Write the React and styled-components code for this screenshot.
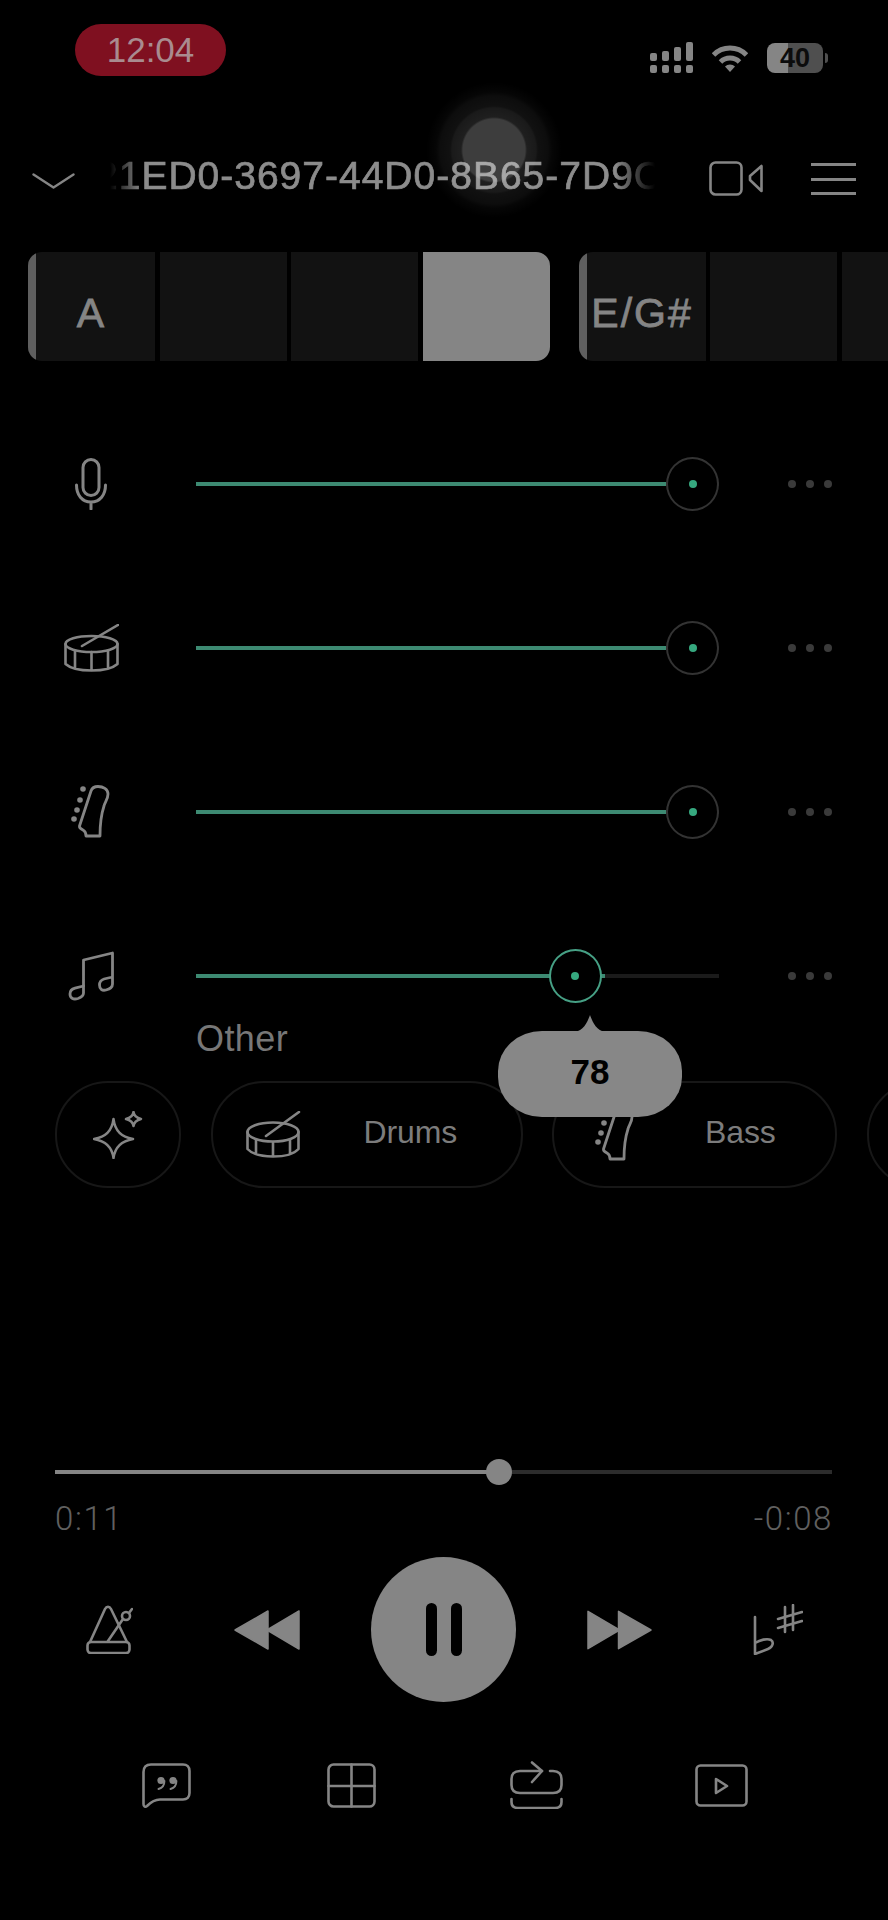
import React from "react";
import styled, { createGlobalStyle } from "styled-components";

const Global = createGlobalStyle`
  html, body { margin: 0; padding: 0; background: #000; }
  * { box-sizing: border-box; }
`;

const GREY = "#858585";

const Page = styled.div`
  position: relative;
  width: 888px;
  height: 1920px;
  background: #000;
  overflow: hidden;
  display: flex;
  flex-direction: column;
  font-family: "Liberation Sans", Arial, sans-serif;
  color: ${GREY};
`;

const StatusBar = styled.div`
  height: 140px;
  padding: 24px 65px 0 75px;
  display: flex;
  justify-content: space-between;
  align-items: flex-start;
`;
const TimePill = styled.div`
  width: 151px;
  height: 52px;
  border-radius: 26px;
  background: #7f1020;
  color: #a98b8f;
  font-size: 35px;
  line-height: 52px;
  text-align: center;
`;
const StatusIcons = styled.div`
  display: flex;
  align-items: flex-start;
  margin-top: 18px;
`;
const Signal = styled.svg`
  width: 44px;
  height: 32px;
  margin-right: 18px;
`;
const Wifi = styled.svg`
  width: 36px;
  height: 27px;
  margin-top: 3px;
  margin-right: 19px;
`;
const Battery = styled.div`
  position: relative;
  width: 56px;
  height: 30px;
  margin-top: 1px;
  border-radius: 8px;
  background: linear-gradient(90deg, #858585 0 38%, #4f4f4f 38% 100%);
  color: #0c0c0c;
  font-size: 27px;
  font-weight: 700;
  line-height: 30px;
  text-align: center;
  &::after {
    content: "";
    position: absolute;
    left: 58px;
    top: 10px;
    width: 3px;
    height: 10px;
    border-radius: 0 3px 3px 0;
    background: #4f4f4f;
  }
`;

const Header = styled.div`
  height: 72px;
  padding-left: 32px;
  display: flex;
  align-items: center;
`;
const Chevron = styled.svg`
  width: 43px;
  height: 16px;
  flex: none;
  margin-top: 10px;
`;
const TitleBox = styled.div`
  width: 545px;
  margin: 0 54px 0 35px;
  overflow: hidden;
  white-space: nowrap;
  mask-image: linear-gradient(90deg, transparent 0, #000 32px, #000 505px, transparent 545px);
`;
const TitleText = styled.div`
  margin-left: -14px;
  font-size: 39px;
  letter-spacing: 1px;
  line-height: 48px;
  color: #8c8c8c;
  -webkit-text-stroke: 0.7px #8c8c8c;
`;
const VideoIcon = styled.svg`
  width: 54px;
  height: 35px;
  flex: none;
  margin: 4px 48px 0 0;
`;
const Menu = styled.div`
  width: 45px;
  height: 32px;
  flex: none;
  display: flex;
  flex-direction: column;
  justify-content: space-between;
  margin-top: 6px;
`;
const MenuLine = styled.span`
  display: block;
  height: 3px;
  background: ${GREY};
`;

const Glow = styled.div`
  position: absolute;
  left: 426px;
  top: 82px;
  width: 136px;
  height: 136px;
  border-radius: 50%;
  background: radial-gradient(
    circle,
    rgba(255, 255, 255, 0.24) 0 31px,
    rgba(255, 255, 255, 0.12) 33px,
    rgba(255, 255, 255, 0.1) 42px,
    rgba(255, 255, 255, 0.065) 44px,
    rgba(255, 255, 255, 0.05) 54px,
    rgba(255, 255, 255, 0.025) 58px,
    rgba(255, 255, 255, 0) 68px
  );
`;

const ChordStrip = styled.div`
  margin-top: 40px;
  height: 109px;
  padding-left: 28px;
  display: flex;
  gap: 29px;
  overflow: hidden;
`;
const ChordGroup = styled.div`
  position: relative;
  flex: none;
  display: flex;
  gap: 4.5px;
  border-radius: 14px;
  overflow: hidden;
  &::before {
    content: "";
    position: absolute;
    left: 0;
    top: 0;
    bottom: 0;
    width: 8px;
    background: #5f5f5f;
  }
`;
const ChordCell = styled.div`
  width: 127px;
  height: 109px;
  padding-top: 14px;
  background: ${(p) => (p.$active ? "#858585" : "#121212")};
  color: #858585;
  font-size: 41px;
  -webkit-text-stroke: 0.8px #858585;
  letter-spacing: 2px;
  line-height: 95px;
  text-align: center;
`;

const Tracks = styled.div`
  margin-top: 96px;
  display: flex;
  flex-direction: column;
  gap: 110px;
`;
const TrackRow = styled.div`
  height: 54px;
  display: flex;
  align-items: center;
`;
const TrackIcon = styled.div`
  width: 196px;
  height: 54px;
  padding-right: 14px;
  display: flex;
  align-items: center;
  justify-content: center;
  flex: none;
`;
const Slider = styled.div`
  position: relative;
  width: 523px;
  height: 54px;
  flex: none;
`;
const SliderTrack = styled.div`
  position: absolute;
  left: 0;
  right: 0;
  top: 25px;
  height: 4px;
  background: #1b1b1b;
`;
const SliderFill = styled.div`
  height: 100%;
  background: #3d8a72;
`;
const Thumb = styled.div`
  position: absolute;
  top: 0;
  width: 53px;
  height: 54px;
  margin-left: -26.5px;
  border-radius: 50%;
  background: #000;
  border: 2px solid ${(p) => (p.$active ? "#46a085" : "#333")};
  display: flex;
  align-items: center;
  justify-content: center;
  &::after {
    content: "";
    width: 8px;
    height: 8px;
    border-radius: 50%;
    background: #36a87f;
  }
`;
const Tooltip = styled.div`
  position: absolute;
  left: 302px;
  top: 82px;
  z-index: 5;
  width: 184px;
  height: 86px;
  border-radius: 44px / 40px;
  background: #878787;
  color: #000;
  font-size: 35px;
  font-weight: 700;
  line-height: 82px;
  text-align: center;
  &::before {
    content: "";
    position: absolute;
    left: 76.5px;
    top: -16px;
    width: 31px;
    height: 17px;
    background: #878787;
    clip-path: path("M0 17 C9 16 13 7 15.5 0 C18 7 22 16 31 17 Z");
  }
`;
const Dots = styled.div`
  margin-left: 69px;
  display: flex;
  gap: 10px;
`;
const Dot = styled.span`
  width: 8px;
  height: 8px;
  border-radius: 50%;
  background: #3a3a3a;
`;
const TrackLabel = styled.div`
  margin: 16px 0 0 196px;
  font-size: 36px;
  letter-spacing: 0.4px;
  line-height: 40px;
  color: #777;
`;

const PillRow = styled.div`
  margin-top: 22px;
  padding-left: 55px;
  display: flex;
  gap: 29.5px;
  overflow: hidden;
`;
const Pill = styled.div`
  flex: none;
  width: ${(p) => p.$w}px;
  height: 107px;
  border: 2px solid #171717;
  border-radius: 53px;
  padding: 0 0 4px 31px;
  display: flex;
  align-items: center;
  color: #7c7c7c;
  font-size: 32px;
  letter-spacing: -0.1px;
`;
const RoundPill = styled(Pill)`
  padding: 0;
  justify-content: center;
`;
const PillIcon = styled.div`
  width: 60px;
  margin-right: 60px;
  display: flex;
  justify-content: center;
  align-items: center;
  flex: none;
  transform: translateY(2px);
`;

const Progress = styled.div`
  position: relative;
  margin: 271px 56px 0 55px;
  height: 26px;
  display: flex;
  align-items: center;
`;
const ProgressTrack = styled.div`
  width: 100%;
  height: 4px;
  background: #2c2c2c;
`;
const ProgressFill = styled.div`
  height: 100%;
  background: #858585;
`;
const ProgressThumb = styled.div`
  position: absolute;
  top: 0;
  width: 26px;
  height: 26px;
  margin-left: -13px;
  border-radius: 50%;
  background: #858585;
`;
const Times = styled.div`
  margin: 14px 55px 0 55px;
  display: flex;
  justify-content: space-between;
  font-family: Roboto, "Liberation Sans", sans-serif;
  font-weight: 300;
  font-size: 33px;
  letter-spacing: 1.6px;
  line-height: 40px;
  color: #606060;
`;

const TransportRow = styled.div`
  margin-top: 18px;
  padding: 0 85px 0 86px;
  height: 145px;
  display: flex;
  align-items: center;
  justify-content: space-between;
`;
const CenterControls = styled.div`
  display: flex;
  align-items: center;
  gap: 71px;
`;
const PlayButton = styled.div`
  width: 145px;
  height: 145px;
  border-radius: 50%;
  background: #858585;
  display: flex;
  align-items: center;
  justify-content: center;
  gap: 14px;
`;
const PauseBar = styled.span`
  width: 11px;
  height: 53px;
  border-radius: 6px;
  background: #000;
`;
const BottomRow = styled.div`
  margin-top: 59px;
  padding-left: 142px;
  display: grid;
  grid-template-columns: 185px 183px 185px auto;
  align-items: center;
`;

const stroke = { fill: "none", stroke: GREY, strokeLinecap: "round", strokeLinejoin: "round" };

const Mic = () => (
  <svg width="32" height="52" viewBox="0 0 32 52" {...stroke} strokeWidth="3">
    <rect x="8" y="1.5" width="16" height="36" rx="8" />
    <path d="M1.5 27 C1.5 37 7 44 16 44 C25 44 30.5 37 30.5 27 M16 44 V51" />
  </svg>
);
const Drum = () => (
  <svg width="55" height="48" viewBox="0 0 55 48" {...stroke} strokeWidth="2.6">
    <ellipse cx="27.5" cy="20" rx="26" ry="8" />
    <path d="M1.5 20 V40 C6 44 16 46.5 27.5 46.5 C39 46.5 49 44 53.5 40 V20 M11 27 V44 M27.5 28 V46 M44 27 V44 M18 22 L54 1" />
  </svg>
);
const PillDrum = () => (
  <svg width="55" height="47" viewBox="0 0 55 47" {...stroke} strokeWidth="2.6">
    <ellipse cx="27" cy="21" rx="25.5" ry="9.5" />
    <path d="M1.5 21 V38 C6 43 16 45.5 27 45.5 C38 45.5 48 43 52.5 38 V21 M10 29 V42 M27 31 V45 M44 29 V42 M20 25 L53 1" />
  </svg>
);
const Bass = () => (
  <svg width="40" height="54" viewBox="0 0 40 54">
    <path
      {...stroke}
      strokeWidth="2.8"
      d="M15 51 H29 C29 44 30 30 33 21 C34 17 37 14 37 9 C37 4 32 1.5 27 1.5 C23 1.5 21 3 20 6 L8.5 41 C8 43 10 44 12 45 C14 46 15 48 15 51 Z"
    />
    <g fill={GREY}>
      <circle cx="12" cy="4" r="2.8" />
      <circle cx="9" cy="15" r="2.8" />
      <circle cx="6" cy="25" r="2.8" />
      <circle cx="3" cy="34" r="2.8" />
    </g>
  </svg>
);
const Notes = () => (
  <svg width="46" height="50" viewBox="0 0 46 50" {...stroke} strokeWidth="2.8">
    <path d="M15.5 35 V9 L44.5 2 V33 C44.5 36 42 38 38 39 C34 40 31.5 38 31.5 34 C31.5 31 33 29 36 28 L44.5 26" />
    <path d="M15.5 35 V42 C15.5 45 13 46.5 10 47.5 C5 49 2 47 2 43 C2 40 4 38 7 37.2 L15.5 35" />
  </svg>
);
const Sparkle = () => (
  <svg width="50" height="48" viewBox="0 0 50 48" {...stroke} strokeWidth="2.5">
    <path d="M20.5 8 C22 20 28 26 40 28 C28 30 22 36 20.5 47 C19 36 13 30 1 28 C13 26 19 20 20.5 8 Z" />
    <path d="M40.5 1 C41 4.5 44 7 48 8 C44 9 41 11 40.5 15 C40 11 37 9 33 8 C37 7 40 4.5 40.5 1 Z" />
  </svg>
);
const Metronome = () => (
  <svg width="47" height="49" viewBox="0 0 47 49" {...stroke} strokeWidth="2.6">
    <path d="M4 37 L19 4 C20.5 1 23.5 1 25 4 L41 37" />
    <rect x="1.5" y="37" width="42" height="11" rx="3.5" />
    <path d="M22 36 L37 14 M43 8 L46 4" />
    <circle cx="40" cy="11" r="4" />
  </svg>
);
const Rewind = () => (
  <svg width="66" height="40" viewBox="0 0 66 40" fill={GREY} stroke={GREY} strokeWidth="1.5" strokeLinejoin="round">
    <path d="M1 20 L34 1 V39 Z" />
    <path d="M33 20 L65 1 V39 Z" />
  </svg>
);
const Forward = () => (
  <svg width="65" height="40" viewBox="0 0 66 40" fill={GREY} stroke={GREY} strokeWidth="1.5" strokeLinejoin="round">
    <path d="M65 20 L32 1 V39 Z" />
    <path d="M33 20 L1 1 V39 Z" />
  </svg>
);
const FlatSharp = () => (
  <svg width="50" height="51" viewBox="0 0 50 51" {...stroke} strokeWidth="2.6">
    <path d="M2 13 V50 L15 45 C20 43 21 38 18 36 C14 34 7 36 2 39" />
    <path d="M32 3 V28 M40 1 V26 M25 15 L49 8 M25 24 L49 17" />
  </svg>
);
const QuoteIcon = () => (
  <svg width="49" height="45" viewBox="0 0 49 45">
    <path
      {...stroke}
      strokeWidth="2.6"
      d="M9 1.5 H41 C45 1.5 47.5 4 47.5 8 V30 C47.5 34 45 36.5 41 36.5 H18 C13 36.5 9 39 5 43 C3 44.5 1.5 43.5 1.5 41 V9 C1.5 4 4 1.5 9 1.5 Z"
    />
    <circle cx="19" cy="17.5" r="3.6" fill={GREY} />
    <circle cx="31" cy="17.5" r="3.6" fill={GREY} />
    <path {...stroke} strokeWidth="2" d="M22.4 18 C22.4 22 20 25 16.5 26 M34.4 18 C34.4 22 32 25 28.5 26" />
  </svg>
);
const GridIcon = () => (
  <svg width="49" height="45" viewBox="0 0 49 45" {...stroke} strokeWidth="2.6">
    <rect x="1.5" y="1.5" width="46" height="42" rx="5" />
    <path d="M24.5 1.5 V43.5 M1.5 23 H47.5" />
  </svg>
);
const RepeatIcon = () => (
  <svg width="53" height="48" viewBox="0 0 53 48" {...stroke} strokeWidth="2.6">
    <path d="M32 10 H10 C4 10 1.5 13 1.5 18 V24 C1.5 29 4 32 10 32 H43 C49 32 51.5 29 51.5 24 V18 C51.5 13 49 10 43 10 H40" />
    <path d="M22 1.5 L32 10 L22 21" />
    <path d="M1.5 38 V41 C1.5 45 4 47 8 47 H45 C49 47 51.5 45 51.5 41 V38" />
  </svg>
);
const VideoPlayIcon = () => (
  <svg width="53" height="43" viewBox="0 0 53 43" {...stroke} strokeWidth="2.6">
    <rect x="1.5" y="1.5" width="50" height="40" rx="4" />
    <path d="M21 15 L32 22 L21 29 Z" />
  </svg>
);

const tracks = [
  { icon: <Mic />, fill: 470, thumb: 496.5 },
  { icon: <Drum />, fill: 470, thumb: 496.5 },
  { icon: <Bass />, fill: 470, thumb: 496.5 },
  { icon: <Notes />, fill: 409, thumb: 379, active: true, tip: 78 },
];

export default function App() {
  return (
    <Page>
      <Global />
      <StatusBar>
        <TimePill>12:04</TimePill>
        <StatusIcons>
          <Signal viewBox="0 0 44 32" fill={GREY}>
            <rect x="0" y="11" width="7" height="8" rx="2" />
            <rect x="12" y="9" width="7" height="10" rx="2" />
            <rect x="24" y="5" width="7" height="14" rx="2" />
            <rect x="36" y="0" width="7" height="19" rx="2" />
            <rect x="0" y="23" width="7" height="8" rx="2" />
            <rect x="12" y="23" width="7" height="8" rx="2" />
            <rect x="24" y="23" width="7" height="8" rx="2" />
            <rect x="36" y="23" width="7" height="8" rx="2" />
          </Signal>
          <Wifi viewBox="0 0 36 27">
            <path d="M1.5 10 A23 23 0 0 1 34.5 10 M8.5 17 A13.5 13.5 0 0 1 27.5 17" fill="none" stroke={GREY} strokeWidth="5" />
            <path d="M18 27 L13 21.5 A7 7 0 0 1 23 21.5 Z" fill={GREY} />
          </Wifi>
          <Battery>40</Battery>
        </StatusIcons>
      </StatusBar>

      <Header>
        <Chevron viewBox="0 0 43 16" {...stroke} strokeWidth="2.4">
          <path d="M1.5 1.5 L21.5 14.5 L41.5 1.5" />
        </Chevron>
        <TitleBox>
          <TitleText>21ED0-3697-44D0-8B65-7D9C</TitleText>
        </TitleBox>
        <VideoIcon viewBox="0 0 54 35" {...stroke} strokeWidth="2.6">
          <rect x="1.5" y="1.5" width="31" height="32" rx="5" />
          <path d="M52.5 5 V30 L41 19 V15 Z" />
        </VideoIcon>
        <Menu>
          <MenuLine />
          <MenuLine />
          <MenuLine />
        </Menu>
      </Header>

      <Glow />

      <ChordStrip>
        <ChordGroup>
          <ChordCell>A</ChordCell>
          <ChordCell />
          <ChordCell />
          <ChordCell $active />
        </ChordGroup>
        <ChordGroup>
          <ChordCell>E/G#</ChordCell>
          <ChordCell />
          <ChordCell />
          <ChordCell />
        </ChordGroup>
      </ChordStrip>

      <Tracks>
        {tracks.map((t, i) => (
          <TrackRow key={i}>
            <TrackIcon>{t.icon}</TrackIcon>
            <Slider>
              <SliderTrack>
                <SliderFill style={{ width: t.fill }} />
              </SliderTrack>
              <Thumb $active={t.active} style={{ left: t.thumb }} />
              {t.tip && <Tooltip>{t.tip}</Tooltip>}
            </Slider>
            <Dots>
              <Dot />
              <Dot />
              <Dot />
            </Dots>
          </TrackRow>
        ))}
      </Tracks>
      <TrackLabel>Other</TrackLabel>

      <PillRow>
        <RoundPill $w={126}>
          <Sparkle />
        </RoundPill>
        <Pill $w={312}>
          <PillIcon>
            <PillDrum />
          </PillIcon>
          Drums
        </Pill>
        <Pill $w={285}>
          <PillIcon>
            <Bass />
          </PillIcon>
          Bass
        </Pill>
        <Pill $w={200} />
      </PillRow>

      <Progress>
        <ProgressTrack>
          <ProgressFill style={{ width: "57.1%" }} />
        </ProgressTrack>
        <ProgressThumb style={{ left: 443.5 }} />
      </Progress>
      <Times>
        <span>0:11</span>
        <span>-0:08</span>
      </Times>

      <TransportRow>
        <Metronome />
        <CenterControls>
          <Rewind />
          <PlayButton>
            <PauseBar />
            <PauseBar />
          </PlayButton>
          <Forward />
        </CenterControls>
        <FlatSharp />
      </TransportRow>

      <BottomRow>
        <QuoteIcon />
        <GridIcon />
        <RepeatIcon />
        <VideoPlayIcon />
      </BottomRow>
    </Page>
  );
}
